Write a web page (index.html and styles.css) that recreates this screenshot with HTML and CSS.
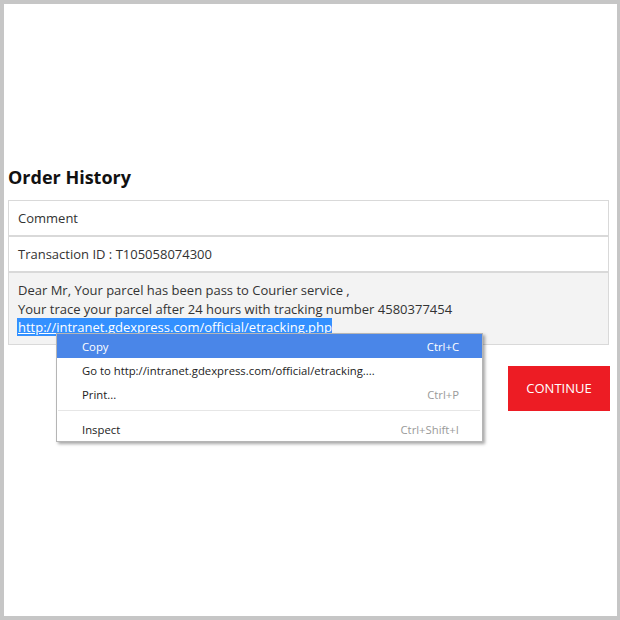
FILE: index.html
```html
<!DOCTYPE html>
<html>
<head>
<meta charset="utf-8">
<title>Order History</title>
<link rel="stylesheet" href="styles.css">
</head>
<body>
<div class="frame">
  <div class="page">
    <h2 class="title">Order History</h2>
    <div class="list">
      <div class="row">Comment</div>
      <div class="row">Transaction ID : T105058074300</div>
      <div class="row row-grey">Dear Mr, Your parcel has been pass to Courier service ,<br>Your trace your parcel after 24 hours with tracking number 4580377454<br><span class="sel"><a class="link" href="#">http://intranet.gdexpress.com/official/etracking.php</a></span></div>
    </div>
    <div class="actions">
      <button class="btn">CONTINUE</button>
    </div>
  </div>
  <div class="menu">
    <div class="item active"><span>Copy</span><span class="key">Ctrl+C</span></div>
    <div class="item"><span>Go to http://intranet.gdexpress.com/official/etracking....</span></div>
    <div class="item"><span>Print...</span><span class="key">Ctrl+P</span></div>
    <div class="sep"></div>
    <div class="item"><span>Inspect</span><span class="key">Ctrl+Shift+I</span></div>
  </div>
</div>
</body>
</html>
```

FILE: styles.css
```css
html, body {
  margin: 0;
  padding: 0;
  background: #ffffff;
}
.frame {
  position: relative;
  width: 620px;
  height: 620px;
  box-sizing: border-box;
  border: 4px solid #c6c6c6;
  border-right-width: 3px;
  background: #ffffff;
  font-family: "Open Sans", "Noto Sans", sans-serif;
  color: #333333;
}
.page {
  padding: 161px 8px 0 4px;
}
.title {
  margin: 0;
  font-size: 18px;
  line-height: 24px;
  font-weight: 700;
  color: #111111;
}
.list {
  margin-top: 11px;
}
.row {
  border: 1px solid #d9d9d9;
  padding: 8px 9px;
  font-size: 13px;
  line-height: 18px;
  background: #ffffff;
}
.row-grey {
  background: #f3f3f3;
  line-height: 18.5px;
  padding-bottom: 7px;
}
.sel {
  background: #3390ff;
  margin-left: -1px;
  padding-left: 1px;
}
.link {
  color: #ffffff;
  text-decoration: underline;
}
.actions {
  display: flex;
  justify-content: flex-end;
  margin-top: 21px;
  margin-right: -1px;
}
.btn {
  width: 102px;
  height: 45px;
  border: none;
  background: #ed1c24;
  color: #ffffff;
  font-family: "Open Sans", "Noto Sans", sans-serif;
  font-size: 13px;
  padding: 0;
}
.menu {
  position: absolute;
  left: 52px;
  top: 329px;
  width: 425px;
  background: #ffffff;
  border: 1px solid #b5b5b5;
  box-shadow: 2px 2px 3px rgba(0, 0, 0, 0.35);
  font-family: "Open Sans", "Noto Sans", sans-serif;
  font-size: 11.3px;
  color: #222222;
}
.item {
  display: flex;
  justify-content: space-between;
  align-items: center;
  height: 24px;
  padding: 0 23px 0 25px;
}
.item.active {
  background: #4a86e8;
  color: #ffffff;
}
.key {
  color: #9a9a9a;
}
.item.active .key {
  color: #ffffff;
}
.sep {
  height: 1px;
  background: #e6e6e6;
  margin: 4px 2px 6px 1px;
}
```
